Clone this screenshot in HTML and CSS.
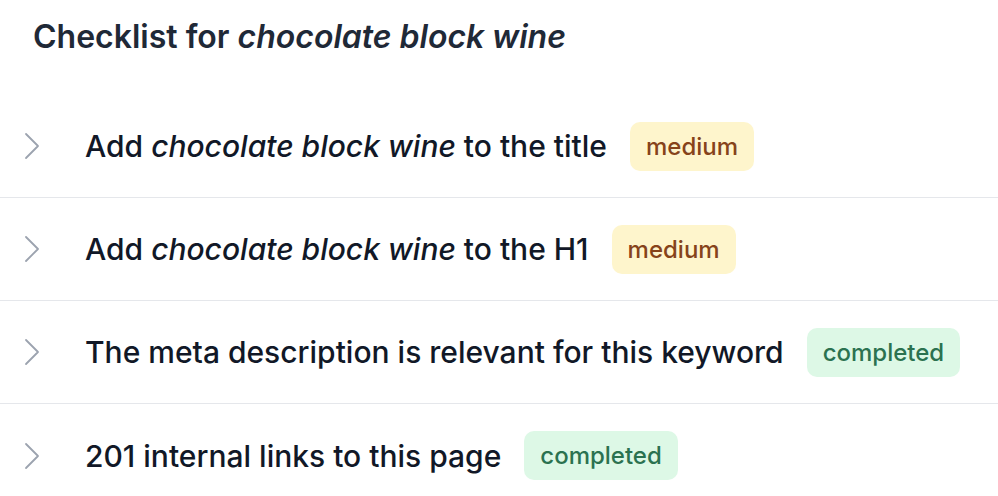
FILE: index.html
```html
<!DOCTYPE html>
<html>
<head>
<meta charset="utf-8">
<link rel="stylesheet" href="styles.css">
</head>
<body>
<div class="panel">
  <h2 class="title">Checklist for <em>chocolate block wine</em></h2>
  <ul class="list">
    <li class="row">
      <svg class="chev" viewBox="0 0 16 28" width="16" height="28"><path d="M2 2 L14 14 L2 26" fill="none" stroke="#9ca3af" stroke-width="1.8" stroke-linecap="round" stroke-linejoin="round"/></svg>
      <span class="label">Add <em>chocolate block wine</em> to the title</span>
      <span class="badge medium">medium</span>
    </li>
    <li class="row">
      <svg class="chev" viewBox="0 0 16 28" width="16" height="28"><path d="M2 2 L14 14 L2 26" fill="none" stroke="#9ca3af" stroke-width="1.8" stroke-linecap="round" stroke-linejoin="round"/></svg>
      <span class="label">Add <em>chocolate block wine</em> to the H1</span>
      <span class="badge medium">medium</span>
    </li>
    <li class="row">
      <svg class="chev" viewBox="0 0 16 28" width="16" height="28"><path d="M2 2 L14 14 L2 26" fill="none" stroke="#9ca3af" stroke-width="1.8" stroke-linecap="round" stroke-linejoin="round"/></svg>
      <span class="label">The meta description is relevant for this keyword</span>
      <span class="badge done">completed</span>
    </li>
    <li class="row">
      <svg class="chev" viewBox="0 0 16 28" width="16" height="28"><path d="M2 2 L14 14 L2 26" fill="none" stroke="#9ca3af" stroke-width="1.8" stroke-linecap="round" stroke-linejoin="round"/></svg>
      <span class="label">201 internal links to this page</span>
      <span class="badge done">completed</span>
    </li>
  </ul>
</div>
</body>
</html>
```
FILE: styles.css
```css
* { box-sizing: border-box; }
html, body { margin: 0; padding: 0; background: #fff; }
body { font-family: Inter, "Noto Sans", sans-serif; color: #111827; }
.panel { width: 998px; }
.title {
  margin: 0;
  padding: 17px 0 0 33px;
  height: 95px;
  font-size: 32px;
  font-weight: 600;
  line-height: 40px;
  color: #1f2937;
}
.title em { font-style: italic; }
.list { list-style: none; margin: 0; padding: 0; }
.row {
  display: flex;
  align-items: center;
  height: 103px;
  padding-left: 24px;
  border-bottom: 1px solid #e5e7eb;
}
.row:last-child { border-bottom: none; }
.chev { flex: none; margin-right: 45px; }
.label { font-size: 30px; font-weight: 500; }
.badge {
  margin-left: 23px;
  height: 49px;
  padding: 0 16px;
  border-radius: 10px;
  display: inline-flex;
  align-items: center;
  font-size: 24px;
  font-weight: 500;
}
.medium { background: #fef5cc; color: #86431a; }
.done { background: #ddf8e6; color: #2b7250; }
```
